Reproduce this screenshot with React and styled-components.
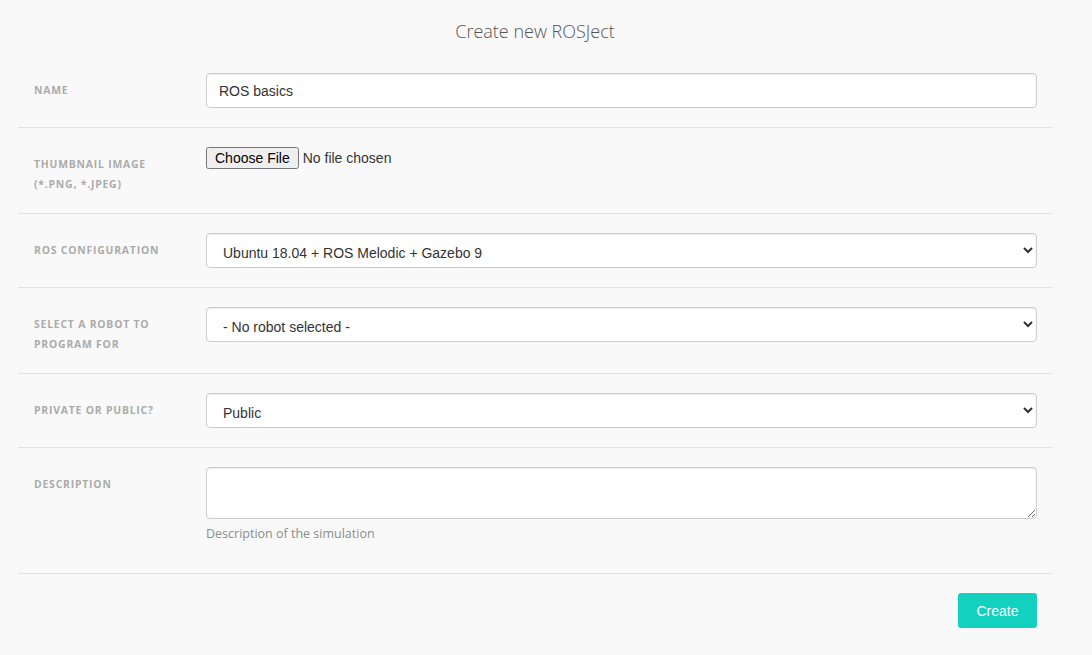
import React from "react";
import styled, { createGlobalStyle } from "styled-components";

const Global = createGlobalStyle`
  html, body { margin: 0; padding: 0; background: #f9f9f9; }
  body { font-family: "Liberation Sans", Arial, sans-serif; color: #333; }
  * { box-sizing: border-box; }
`;

const Page = styled.div`
  padding: 0 40px 0 18px;
`;

const Title = styled.h1`
  margin: 0;
  height: 54px;
  padding-top: 19px;
  text-align: center;
  font-family: "Open Sans", sans-serif;
  font-weight: 300;
  font-size: 18px;
  line-height: 24px;
  color: #555;
`;

const Row = styled.div`
  display: grid;
  grid-template-columns: 188px 1fr;
  padding: 19px 15px 19px 0;
  border-bottom: 1px solid #e3e3e3;
`;

const Label = styled.label`
  padding: 7px 0 0 16px;
  font-family: "Open Sans", sans-serif;
  font-weight: 700;
  font-size: 10.4px;
  line-height: 20px;
  letter-spacing: 0.8px;
  text-transform: uppercase;
  color: #ababab;
`;

const Field = styled.div`
  display: flex;
  flex-direction: column;
  align-items: ${(p) => (p.$start ? "flex-start" : "stretch")};
`;

const controlCss = `
  width: 100%;
  height: 35px;
  padding: 6px 12px;
  font-family: "Liberation Sans", Arial, sans-serif;
  font-size: 14px;
  color: #333;
  background: #fff;
  border: 1px solid #ccc;
  border-radius: 4px;
  box-shadow: inset 0 1px 1px rgba(0,0,0,.075);
  outline: none;
`;

const Input = styled.input`
  ${controlCss}
`;

const Select = styled.select`
  ${controlCss}
  padding: 8px 15px 4px 12px;
`;

const TextArea = styled.textarea`
  ${controlCss}
  height: 52px;
  resize: vertical;
`;

const FileInput = styled.input`
  font-family: "Liberation Sans", Arial, sans-serif;
  font-size: 14px;
  color: #333;
  &::file-selector-button {
    font-family: "Liberation Sans", Arial, sans-serif;
    font-size: 14px;
    margin-right: 4px;
    padding: 1px 7px;
  }
`;

const Help = styled.span`
  margin: 5px 0 10px;
  font-family: "Open Sans", sans-serif;
  font-weight: 400;
  font-size: 12.5px;
  line-height: 20px;
  color: #8c8c8c;
`;

const Actions = styled.div`
  display: flex;
  justify-content: flex-end;
  padding: 19px 15px 0 0;
`;

const Button = styled.button`
  width: 79px;
  height: 35px;
  border: none;
  border-radius: 3px;
  background: #12d1bf;
  color: #fff;
  font-family: "Liberation Sans", Arial, sans-serif;
  font-size: 14px;
  cursor: pointer;
`;

export default function App() {
  return (
    <>
      <Global />
      <Page>
        <Title>Create new ROSJect</Title>
        <Row>
          <Label>Name</Label>
          <Field>
            <Input defaultValue="ROS basics" />
          </Field>
        </Row>
        <Row>
          <Label>
            Thumbnail image
            <br />
            (*.png, *.jpeg)
          </Label>
          <Field $start>
            <FileInput type="file" />
          </Field>
        </Row>
        <Row>
          <Label>ROS Configuration</Label>
          <Field>
            <Select defaultValue="melodic">
              <option value="melodic">Ubuntu 18.04 + ROS Melodic + Gazebo 9</option>
            </Select>
          </Field>
        </Row>
        <Row>
          <Label>
            Select a robot to
            <br />
            program for
          </Label>
          <Field>
            <Select defaultValue="none">
              <option value="none">- No robot selected -</option>
            </Select>
          </Field>
        </Row>
        <Row>
          <Label>Private or public?</Label>
          <Field>
            <Select defaultValue="public">
              <option value="public">Public</option>
              <option value="private">Private</option>
            </Select>
          </Field>
        </Row>
        <Row>
          <Label>Description</Label>
          <Field>
            <TextArea />
            <Help>Description of the simulation</Help>
          </Field>
        </Row>
        <Actions>
          <Button>Create</Button>
        </Actions>
      </Page>
    </>
  );
}
